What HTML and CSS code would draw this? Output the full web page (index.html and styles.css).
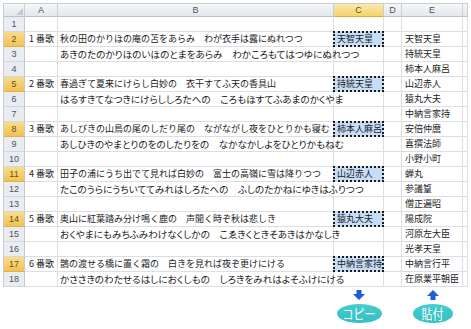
FILE: index.html
```html
<!DOCTYPE html>
<html lang="ja">
<head>
<meta charset="utf-8">
<title>百人一首</title>
<link rel="stylesheet" href="styles.css">
</head>
<body>
<div class="page">
  <div class="sheet">
    <div class="c h corner"><svg width="7" height="7" viewBox="0 0 7 7"><polygon points="7,0 7,7 0,7" fill="#c3c9d1"/></svg></div>
    <div class="c h">A</div><div class="c h">B</div><div class="c h sel">C</div><div class="c h">D</div><div class="c h">E</div><div class="c h"></div>

    <div class="c rh">1</div><div class="c a"></div><div class="c b"></div><div class="c cc"></div><div class="c"></div><div class="c e"></div><div class="c"></div>

    <div class="c rh sel">2</div><div class="c a">1 番歌</div><div class="c b">秋の田のかりほの庵の苫をあらみ　わが衣手は露にぬれつつ</div><div class="c cc pick">天智天皇</div><div class="c"></div><div class="c e">天智天皇</div><div class="c"></div>
    <div class="c rh">3</div><div class="c a"></div><div class="c b kana">あきのたのかりほのいほのとまをあらみ　わかころもてはつゆにぬれつつ</div><div class="c cc"></div><div class="c"></div><div class="c e">持統天皇</div><div class="c"></div>
    <div class="c rh">4</div><div class="c a"></div><div class="c b"></div><div class="c cc"></div><div class="c"></div><div class="c e">柿本人麻呂</div><div class="c"></div>

    <div class="c rh sel">5</div><div class="c a">2 番歌</div><div class="c b">春過ぎて夏来にけらし白妙の　衣干すてふ天の香具山</div><div class="c cc pick">持統天皇</div><div class="c"></div><div class="c e">山辺赤人</div><div class="c"></div>
    <div class="c rh">6</div><div class="c a"></div><div class="c b kana">はるすきてなつきにけらししろたへの　ころもほすてふあまのかくやま</div><div class="c cc"></div><div class="c"></div><div class="c e">猿丸大夫</div><div class="c"></div>
    <div class="c rh">7</div><div class="c a"></div><div class="c b"></div><div class="c cc"></div><div class="c"></div><div class="c e">中納言家持</div><div class="c"></div>

    <div class="c rh sel">8</div><div class="c a">3 番歌</div><div class="c b">あしびきの山鳥の尾のしだり尾の　ながながし夜をひとりかも寝む</div><div class="c cc pick">柿本人麻呂</div><div class="c"></div><div class="c e">安倍仲麿</div><div class="c"></div>
    <div class="c rh">9</div><div class="c a"></div><div class="c b kana">あしひきのやまとりのをのしたりをの　なかなかしよをひとりかもねむ</div><div class="c cc"></div><div class="c"></div><div class="c e">喜撰法師</div><div class="c"></div>
    <div class="c rh">10</div><div class="c a"></div><div class="c b"></div><div class="c cc"></div><div class="c"></div><div class="c e">小野小町</div><div class="c"></div>

    <div class="c rh sel">11</div><div class="c a">4 番歌</div><div class="c b">田子の浦にうち出でて見れば白妙の　富士の高嶺に雪は降りつつ</div><div class="c cc pick">山辺赤人</div><div class="c"></div><div class="c e">蝉丸</div><div class="c"></div>
    <div class="c rh">12</div><div class="c a"></div><div class="c b kana">たこのうらにうちいててみれはしろたへの　ふしのたかねにゆきはふりつつ</div><div class="c cc"></div><div class="c"></div><div class="c e">参議篁</div><div class="c"></div>
    <div class="c rh">13</div><div class="c a"></div><div class="c b"></div><div class="c cc"></div><div class="c"></div><div class="c e">僧正遍昭</div><div class="c"></div>

    <div class="c rh sel">14</div><div class="c a">5 番歌</div><div class="c b">奥山に紅葉踏み分け鳴く鹿の　声聞く時ぞ秋は悲しき</div><div class="c cc pick">猿丸大夫</div><div class="c"></div><div class="c e">陽成院</div><div class="c"></div>
    <div class="c rh">15</div><div class="c a"></div><div class="c b kana">おくやまにもみちふみわけなくしかの　こゑきくときそあきはかなしき</div><div class="c cc"></div><div class="c"></div><div class="c e">河原左大臣</div><div class="c"></div>
    <div class="c rh">16</div><div class="c a"></div><div class="c b"></div><div class="c cc"></div><div class="c"></div><div class="c e">光孝天皇</div><div class="c"></div>

    <div class="c rh sel">17</div><div class="c a">6 番歌</div><div class="c b">鵲の渡せる橋に置く霜の　白きを見れば夜ぞ更けにける</div><div class="c cc pick">中納言家持</div><div class="c"></div><div class="c e">中納言行平</div><div class="c"></div>
    <div class="c rh">18</div><div class="c a"></div><div class="c b kana">かささきのわたせるはしにおくしもの　しろきをみれはよそふけにける</div><div class="c cc"></div><div class="c"></div><div class="c e">在原業平朝臣</div><div class="c"></div>
  </div>

  <div class="below">
    <div class="mark copy">
      <svg class="arrow" width="12" height="10" viewBox="0 0 12 10"><polygon points="3.5,0 8.5,0 8.5,4 12,4 6,10 0,4 3.5,4" fill="#1d5ed6"/></svg>
      <div class="badge wide"><span>コピー</span></div>
    </div>
    <div class="mark paste">
      <svg class="arrow" width="12" height="10" viewBox="0 0 12 10"><polygon points="6,0 12,6 8.5,6 8.5,10 3.5,10 3.5,6 0,6" fill="#1d5ed6"/></svg>
      <div class="badge"><span>貼付</span></div>
    </div>
  </div>
</div>
</body>
</html>
```

FILE: styles.css
```css
html, body {
  margin: 0;
  background: #ffffff;
}

body {
  font-family: "Noto Sans CJK JP", "Noto Sans", sans-serif;
  color: #1c1c1c;
}

.page {
  padding: 3px 0 0 3px;
}

.sheet {
  display: grid;
  grid-template-columns: 21px 33px 276px 50px 18px 61px 5px;
  grid-template-rows: 13px repeat(18, 15px);
  width: max-content;
  border-top: 1px solid #c8ced6;
  border-left: 1px solid #c8ced6;
}

.c {
  box-sizing: border-box;
  display: flex;
  align-items: center;
  min-width: 0;
  border-right: 1px solid #dcdee1;
  border-bottom: 1px solid #dcdee1;
  font-size: 9px;
  line-height: 14px;
  white-space: nowrap;
}

.h {
  justify-content: center;
  background: linear-gradient(#f6f7f9, #e3e7ec);
  border-right-color: #c9cfd7;
  border-bottom-color: #b9c2cd;
  color: #4a5566;
  font-family: "Liberation Sans", "Noto Sans", sans-serif;
  font-size: 9px;
}

.h.sel {
  background: linear-gradient(#fbe9ad, #f5d36b);
  border-bottom-color: #e2a93a;
  color: #5c4a22;
}

.corner {
  justify-content: flex-end;
  align-items: flex-end;
  padding: 0 1px 1px 0;
}

.rh {
  justify-content: center;
  background: #e9ecf0;
  border-right-color: #c0c8d2;
  border-bottom-color: #d2d7de;
  color: #4a5566;
  font-family: "Liberation Sans", "Noto Sans", sans-serif;
  font-size: 9px;
}

.rh.sel {
  background: linear-gradient(#f9dc8c, #f2c251);
  border-bottom-color: #e4b04a;
  color: #6a5020;
}

.a {
  justify-content: flex-end;
  padding-right: 3px;
}

.b {
  padding-left: 2px;
}

.kana {
  font-size: 9.6px;
  font-feature-settings: "palt";
}

.cc {
  padding-left: 3px;
}

.pick {
  position: relative;
  background: #c6ddf7;
}

.pick::after {
  content: "";
  position: absolute;
  left: -1px;
  top: -1px;
  right: -1px;
  bottom: -1px;
  border: 2px dotted #1a1a1a;
}

.e {
  padding-left: 3px;
}

.below {
  display: grid;
  grid-template-columns: 22px 33px 276px 50px 18px 61px 5px;
  padding-top: 3px;
}

.mark {
  display: flex;
  flex-direction: column;
  align-items: center;
  gap: 4px;
}

.copy {
  grid-column: 4;
}

.paste {
  grid-column: 6;
}

.badge {
  width: 40px;
  height: 19px;
  border-radius: 50%;
  background: linear-gradient(#45cdd0, #34bfc2);
  color: #ffffff;
  display: flex;
  align-items: center;
  justify-content: center;
  font-size: 11px;
}

.badge.wide {
  width: 45px;
}

.badge span {
  display: inline-block;
  transform: scaleY(1.2);
  line-height: 1;
}
```
